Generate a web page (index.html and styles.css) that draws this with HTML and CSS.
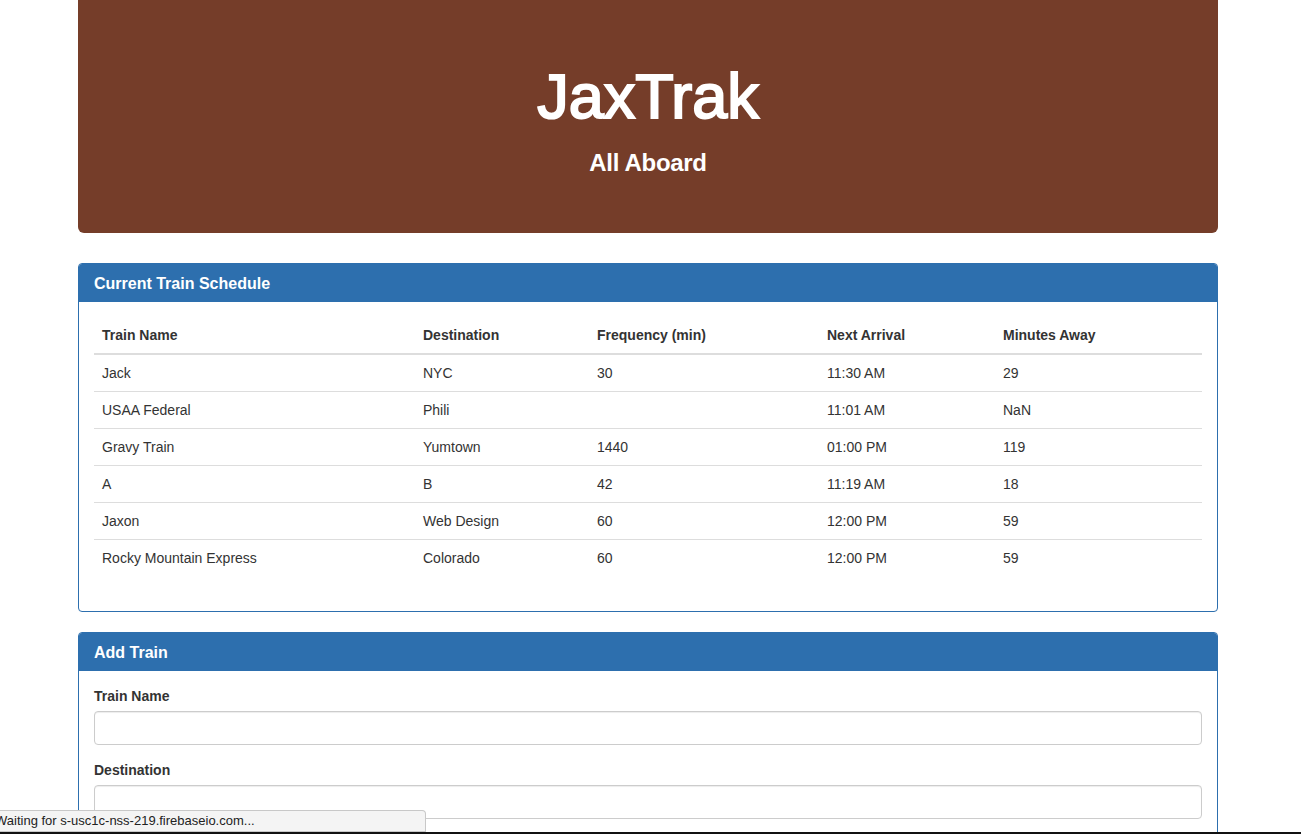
FILE: index.html
```html
<!DOCTYPE html>
<html lang="en">
<head>
<meta charset="utf-8">
<title>JaxTrak</title>
<link rel="stylesheet" href="styles.css">
</head>
<body>
<div class="container">
  <div class="jumbotron">
    <h1 class="jumbo-title">JaxTrak</h1>
    <h3 class="jumbo-sub">All Aboard</h3>
  </div>

  <div class="panel">
    <div class="panel-heading"><h3 class="panel-title">Current Train Schedule</h3></div>
    <div class="panel-body">
      <table class="table">
        <colgroup>
          <col class="c1"><col class="c2"><col class="c3"><col class="c4"><col class="c5">
        </colgroup>
        <thead>
          <tr><th>Train Name</th><th>Destination</th><th>Frequency (min)</th><th>Next Arrival</th><th>Minutes Away</th></tr>
        </thead>
        <tbody>
          <tr><td>Jack</td><td>NYC</td><td>30</td><td>11:30 AM</td><td>29</td></tr>
          <tr><td>USAA Federal</td><td>Phili</td><td></td><td>11:01 AM</td><td>NaN</td></tr>
          <tr><td>Gravy Train</td><td>Yumtown</td><td>1440</td><td>01:00 PM</td><td>119</td></tr>
          <tr><td>A</td><td>B</td><td>42</td><td>11:19 AM</td><td>18</td></tr>
          <tr><td>Jaxon</td><td>Web Design</td><td>60</td><td>12:00 PM</td><td>59</td></tr>
          <tr><td>Rocky Mountain Express</td><td>Colorado</td><td>60</td><td>12:00 PM</td><td>59</td></tr>
        </tbody>
      </table>
    </div>
  </div>

  <div class="panel">
    <div class="panel-heading"><h3 class="panel-title">Add Train</h3></div>
    <div class="panel-body">
      <form class="form">
        <div class="form-group">
          <label class="label" for="train-name">Train Name</label>
          <input class="form-control" id="train-name" type="text">
        </div>
        <div class="form-group">
          <label class="label" for="destination">Destination</label>
          <input class="form-control" id="destination" type="text">
        </div>
      </form>
    </div>
  </div>
</div>

<div class="status-bar">Waiting for s-usc1c-nss-219.firebaseio.com...</div>
<div class="window-edge"></div>
</body>
</html>
```

FILE: styles.css
```css
* { box-sizing: border-box; }

html, body {
  margin: 0;
  padding: 0;
  background: #fff;
}

body {
  font-family: "Liberation Sans", Arial, Helvetica, sans-serif;
  font-size: 14px;
  line-height: 20px;
  color: #333;
}

.container {
  width: 1140px;
  margin-left: 78px;
}

.jumbotron {
  background: #753d29;
  color: #fff;
  text-align: center;
  padding: 62px 60px 57px;
  border-radius: 0 0 6px 6px;
  margin-bottom: 30px;
}

.jumbo-title {
  margin: 0 0 19px;
  font-size: 63px;
  line-height: 69px;
  font-weight: 400;
  -webkit-text-stroke: 2px #fff;
}

.jumbo-sub {
  margin: 0;
  font-size: 24px;
  line-height: 26px;
  font-weight: 700;
  letter-spacing: -0.3px;
}

.panel {
  border: 1px solid #2d6fae;
  border-radius: 4px;
  margin-bottom: 20px;
  background: #fff;
}

.panel-heading {
  background: #2d6fae;
  color: #fff;
  padding: 11px 15px 9px;
  border-bottom: 1px solid #2d6fae;
  border-radius: 3px 3px 0 0;
}

.panel-title {
  margin: 0;
  font-size: 16px;
  line-height: 17px;
  font-weight: 700;
}

.panel-body {
  padding: 15px;
}

.table {
  width: 100%;
  border-collapse: collapse;
  border-spacing: 0;
  margin-bottom: 20px;
}

.c1 { width: 321px; }
.c2 { width: 174px; }
.c3 { width: 230px; }
.c4 { width: 176px; }
.c5 { width: 207px; }

.table th,
.table td {
  padding: 8px;
  text-align: left;
  vertical-align: top;
  line-height: 20px;
}

.table th {
  font-weight: 700;
  border-bottom: 2px solid #ddd;
}

.table td {
  border-top: 1px solid #ddd;
}

.form-group {
  margin-bottom: 15px;
}

.label {
  display: block;
  font-weight: 700;
  margin-bottom: 5px;
}

.form-control {
  display: block;
  width: 100%;
  height: 34px;
  padding: 6px 12px;
  font-size: 14px;
  font-family: inherit;
  color: #555;
  background: #fff;
  border: 1px solid #ccc;
  border-radius: 4px;
  box-shadow: inset 0 1px 1px rgba(0,0,0,.075);
}

.status-bar {
  position: fixed;
  left: -1px;
  bottom: 2px;
  width: 427px;
  height: 22px;
  background: #f4f4f4;
  border: 1px solid #c8c8c8;
  border-left: 0;
  border-radius: 0 4px 0 0;
  font-size: 13px;
  line-height: 20px;
  color: #222;
  white-space: nowrap;
  overflow: hidden;
  text-indent: -4px;
}

.window-edge {
  position: fixed;
  left: 0;
  right: 0;
  bottom: 0;
  height: 2px;
  background: #111;
}
```
